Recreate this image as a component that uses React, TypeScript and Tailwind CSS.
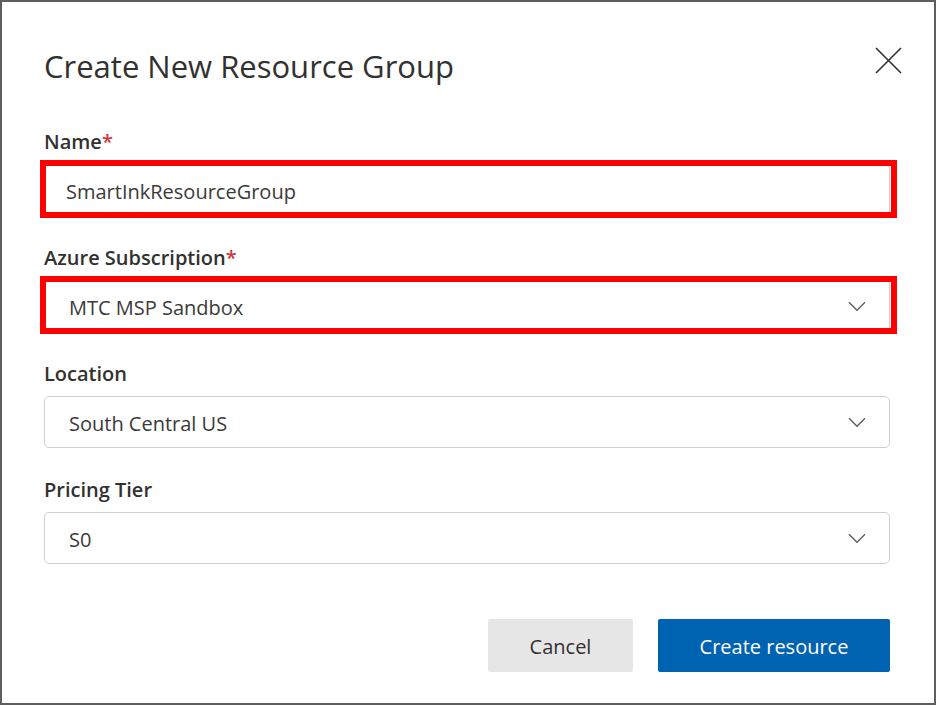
import React from "react";

const font = { fontFamily: '"Open Sans", "Noto Sans", Arial, sans-serif' };

function Chevron() {
  return (
    <svg width="18" height="11" viewBox="0 0 18 11" fill="none" className="shrink-0">
      <path d="M1 1.2 L9 9.2 L17 1.2" stroke="#605e5c" strokeWidth="1.4" />
    </svg>
  );
}

function Label({ text, required }: { text: string; required?: boolean }) {
  return (
    <div className="h-[28px] text-[20px] leading-[28px] font-semibold text-[#323130]">
      {text}
      {required && <span className="text-[#d13438]">*</span>}
    </div>
  );
}

function Field({
  value,
  dropdown,
  highlight,
}: {
  value: string;
  dropdown?: boolean;
  highlight?: boolean;
}) {
  return (
    <div className="relative mt-[8px]">
      <div
        className={
          dropdown
            ? "h-[52px] border-[1.5px] border-[#cfcfcf] rounded-[5px] bg-white flex items-center justify-between pl-[24px] pr-[23px]"
            : "h-[52px] border-[1.5px] border-[#cfcfcf] rounded-[5px] bg-white flex items-center pl-[21px]"
        }
      >
        <span className="text-[20px] text-[#3b3a39] pt-[4px]">{value}</span>
        {dropdown && <Chevron />}
      </div>
      {highlight && (
        <div className="absolute left-[-4px] right-[-7px] top-[-4px] bottom-[-2px] border-[6px] border-[#ff0000] pointer-events-none" />
      )}
    </div>
  );
}

export default function App() {
  return (
    <div
      className="w-[936px] h-[705px] bg-white border-2 border-[#5e5e5e] overflow-hidden"
      style={font}
    >
      <div className="pl-[42px] pr-[44px] pt-[43px]">
        <div className="flex items-start justify-between">
          <h1 className="text-[31px] leading-[40px] font-normal text-[#323130] pt-[1px]">
            Create New Resource Group
          </h1>
          <svg
            width="27"
            height="27"
            viewBox="0 0 27 27"
            className="mr-[-12px] mt-[2px]"
          >
            <path d="M1 1 L26 26 M26 1 L1 26" stroke="#323130" strokeWidth="1.6" />
          </svg>
        </div>

        <div className="mt-[42px]">
          <Label text="Name" required />
          <Field value="SmartInkResourceGroup" highlight />
        </div>

        <div className="mt-[28px]">
          <Label text="Azure Subscription" required />
          <Field value="MTC MSP Sandbox" dropdown highlight />
        </div>

        <div className="mt-[28px]">
          <Label text="Location" />
          <Field value="South Central US" dropdown />
        </div>

        <div className="mt-[28px]">
          <Label text="Pricing Tier" />
          <Field value="S0" dropdown />
        </div>

        <div className="mt-[55px] flex justify-end gap-[25px]">
          <button className="w-[145px] h-[53px] bg-[#e6e6e6] rounded-[2px] text-[20px] text-[#323130] pt-[3px]">
            Cancel
          </button>
          <button className="w-[232px] h-[53px] bg-[#0063b1] rounded-[2px] text-[20px] text-white pt-[3px]">
            Create resource
          </button>
        </div>
      </div>
    </div>
  );
}
